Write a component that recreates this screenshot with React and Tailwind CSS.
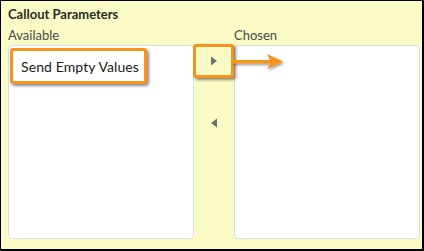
import React from 'react';

const Triangle = ({ dir }) => (
    <svg width="8" height="10" viewBox="0 0 8 10">
        {dir === 'right'
            ? <path d="M1 0.5 L7 5 L1 9.5 Z" fill="#706e6b" />
            : <path d="M7 0.5 L1 5 L7 9.5 Z" fill="#706e6b" />}
    </svg>
);

const App = () => {
    return (
        <div className="w-[424px] h-[251px] bg-[#fbfbc6] border-t border-l border-r-2 border-b-2 border-black pl-[7px] pr-[2px] pt-[4px] font-['Lato',sans-serif] relative">
            <div className="text-[13px] font-bold text-[#2b2b2b] leading-[18px]">Callout Parameters</div>
            <div className="flex mt-[2px]">
                {/* Available */}
                <div className="w-[186px] flex flex-col">
                    <div className="text-[13px] text-[#4a4a4a] leading-[20px] h-[20px]">Available</div>
                    <div className="h-[194px] bg-white border border-[#d8dde6] rounded-[4px] pt-[2px] pl-[1px]">
                        <div className="w-[137px] h-[36px] border-[3px] border-[#f7941d] rounded-[3px] bg-white shadow-[2px_2px_3px_rgba(0,0,0,0.45)] flex items-center pl-[8px] text-[14px] tracking-[0.1px] text-[#1a1a1a] whitespace-nowrap">
                            Send Empty Values
                        </div>
                    </div>
                </div>

                {/* Buttons */}
                <div className="w-[40px] flex flex-col items-center pt-[19px]">
                    <div className="w-[41px] h-[34px] -ml-[1px] border-[3px] border-[#f7941d] rounded-[3px] bg-[#fbfbc6] shadow-[2px_2px_3px_rgba(0,0,0,0.45)] flex items-center justify-center relative z-10">
                        <Triangle dir="right" />
                    </div>
                    <div className="h-[28px]" />
                    <div className="w-[40px] h-[34px] flex items-center justify-center">
                        <Triangle dir="left" />
                    </div>
                </div>

                {/* Chosen */}
                <div className="w-[186px] flex flex-col">
                    <div className="text-[13px] text-[#4a4a4a] leading-[20px] h-[20px]">Chosen</div>
                    <div className="h-[194px] bg-white border border-[#d8dde6] rounded-[4px]" />
                </div>
            </div>

            {/* callout arrow */}
            <svg className="absolute left-[231px] top-[51px] z-20" width="58" height="22" viewBox="0 0 58 22">
                <defs>
                    <filter id="sh" x="-10%" y="-30%" width="130%" height="170%">
                        <feDropShadow dx="1.5" dy="1.5" stdDeviation="1" floodColor="#000" floodOpacity="0.4" />
                    </filter>
                </defs>
                <path d="M0 8 H38 L35 2 L51 9.5 L35 17 L38 11.5 H0 Z" fill="#f7941d" filter="url(#sh)" />
            </svg>
        </div>
    );
};

export default App;
